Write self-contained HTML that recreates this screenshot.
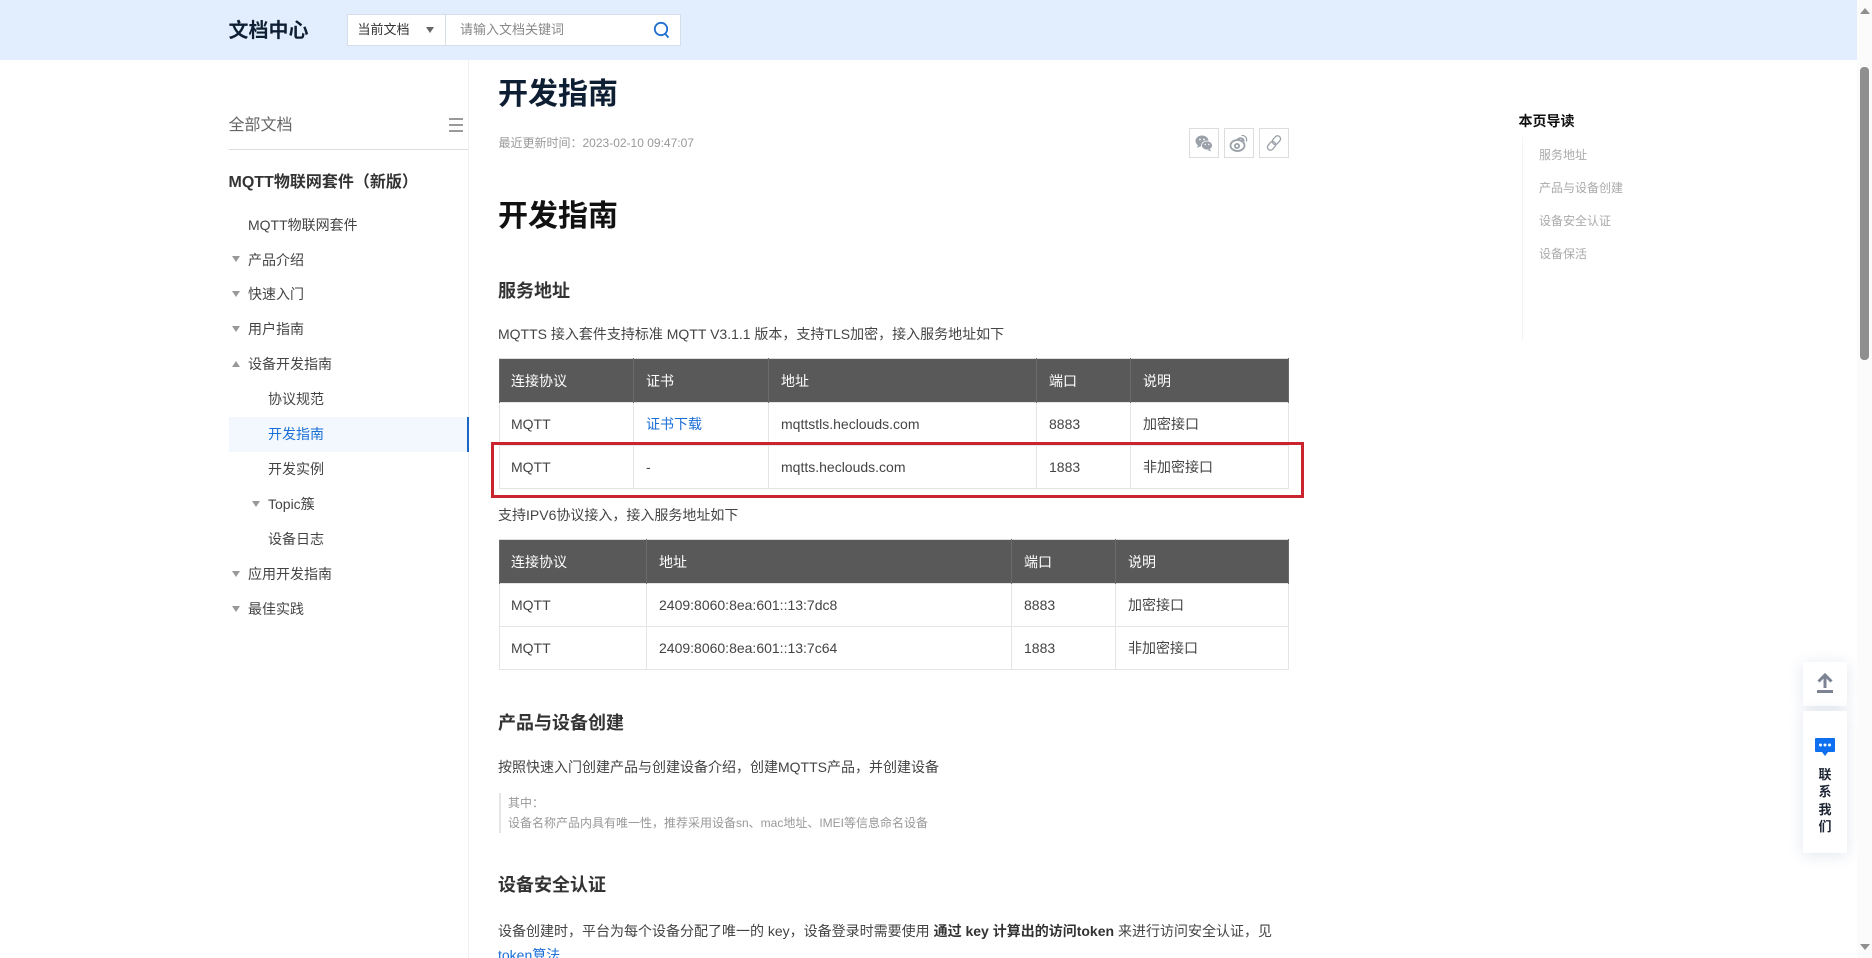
<!DOCTYPE html>
<html lang="zh-CN">
<head>
<meta charset="utf-8">
<title>开发指南</title>
<style>
html,body{margin:0;padding:0;width:1872px;height:958px;overflow:hidden;background:#fff}
body{position:relative;font-family:"Liberation Sans","Noto Sans CJK SC",sans-serif;color:#333;font-size:14px}
.a{position:absolute;white-space:nowrap}
.t{position:absolute;white-space:nowrap;height:24px;line-height:24px}
.n{font-size:14px;color:#444}
.caret{position:absolute;width:0;height:0;border-left:4.500px solid transparent;border-right:4.500px solid transparent;border-top:6px solid #999}
.up{border-top:0;border-bottom:6px solid #999}
h1,h2{margin:0;font-weight:700}
.h1{font-size:30px;height:40px;line-height:40px;left:498px}
.h2{font-size:18px;color:#333;left:498px;height:30px;line-height:30px}
.p{left:498px;font-size:14px;color:#444}
table{position:absolute;left:499px;width:789px;border-collapse:collapse;table-layout:fixed;font-size:14px;color:#444}
th{background:#595959;color:#fff;font-weight:400;text-align:left;padding:0 0 0 12px;height:44px;border:1px solid #6a6a6a;border-top:1px solid #ddd;border-bottom:0;box-sizing:border-box}
td{height:43px;padding:0 0 1px 12px;border:1px solid #e5e5e5;box-sizing:border-box}
th:first-child,td:first-child{padding-left:11px}
a{color:#1a6fd6;text-decoration:none}
.share{position:absolute;top:128px;width:30px;height:30px;box-sizing:border-box;border:1px solid #ddd;background:#fff}
.share svg{position:absolute;left:4px;top:4px}
.toc{left:1539px;font-size:12px;color:#aaa}
</style>
</head>
<body>
<!-- header -->
<div class="a" style="left:0;top:0;width:1857px;height:60px;background:#e2eefd"></div>
<div class="t" style="left:228.500px;top:17px;height:28px;line-height:28px;font-size:20px;font-weight:700;color:#0f1f33">文档中心</div>
<div class="a" style="left:346.500px;top:14px;width:334px;height:32px;box-sizing:border-box;background:#fff;border:1px solid #d5dde8"></div>
<div class="a" style="left:445px;top:15px;width:1px;height:30px;background:#d5dde8"></div>
<div class="t" style="left:357.500px;top:18px;font-size:13px;color:#333">当前文档</div>
<div class="caret" style="left:425.500px;top:27px;border-top-color:#666"></div>
<div class="t" style="left:460px;top:18px;font-size:13px;color:#888">请输入文档关键词</div>
<svg class="a" style="left:653px;top:21px" width="17" height="18" viewBox="0 0 17 18"><circle cx="8" cy="8" r="6.200" fill="none" stroke="#1f6fd0" stroke-width="1.800"/><path d="M12.200 12.800l3.300 3.800" stroke="#1f6fd0" stroke-width="1.800" fill="none"/></svg>

<!-- sidebar -->
<div class="t" style="left:228.500px;top:114px;font-size:16px;color:#666">全部文档</div>
<div class="a" style="left:449px;top:118px;width:14px;height:2px;background:#999"></div>
<div class="a" style="left:449px;top:124px;width:14px;height:2px;background:#999"></div>
<div class="a" style="left:449px;top:130px;width:14px;height:2px;background:#999"></div>
<div class="a" style="left:229px;top:149px;width:239px;height:1px;background:#ddd"></div>
<div class="a" style="left:468px;top:60px;width:1px;height:898px;background:#f0f0f0"></div>
<div class="t" style="left:228.500px;top:171px;font-size:16px;font-weight:700;color:#333">MQTT物联网套件（新版）</div>
<div class="t n" style="left:248px;top:212.500px">MQTT物联网套件</div>
<div class="caret" style="left:231.500px;top:256px"></div><div class="t n" style="left:248px;top:247.500px">产品介绍</div>
<div class="caret" style="left:231.500px;top:291px"></div><div class="t n" style="left:248px;top:282px">快速入门</div>
<div class="caret" style="left:231.500px;top:326px"></div><div class="t n" style="left:248px;top:317px">用户指南</div>
<div class="caret up" style="left:231.500px;top:361px"></div><div class="t n" style="left:248px;top:352px">设备开发指南</div>
<div class="t n" style="left:268px;top:387px">协议规范</div>
<div class="a" style="left:229px;top:417px;width:240px;height:35px;box-sizing:border-box;background:#f2f8fe;border-right:2px solid #1a66c6"></div>
<div class="t n" style="left:268px;top:422px;color:#1a6fd6">开发指南</div>
<div class="t n" style="left:268px;top:457px">开发实例</div>
<div class="caret" style="left:251.500px;top:501px"></div><div class="t n" style="left:268px;top:492px">Topic簇</div>
<div class="t n" style="left:268px;top:527px">设备日志</div>
<div class="caret" style="left:231.500px;top:571px"></div><div class="t n" style="left:248px;top:562px">应用开发指南</div>
<div class="caret" style="left:231.500px;top:606px"></div><div class="t n" style="left:248px;top:597px">最佳实践</div>

<!-- main -->
<h1 class="a h1" style="top:75px;color:#0f1f33">开发指南</h1>
<div class="t" style="left:498.500px;top:131px;font-size:12px;color:#999">最近更新时间：2023-02-10 09:47:07</div>
<div class="share" style="left:1189px"><svg width="20" height="20" viewBox="0 0 20 20"><ellipse cx="8" cy="8" rx="6.500" ry="5.500" fill="#9ba1a9"/><path d="M4 12l-1 3 4-2z" fill="#9ba1a9"/><ellipse cx="13" cy="12.500" rx="5.500" ry="4.500" fill="#9ba1a9" stroke="#fff" stroke-width=".8"/><path d="M16 16l1 2.500-3.500-1.500z" fill="#9ba1a9"/><circle cx="6" cy="6.500" r=".9" fill="#fff"/><circle cx="10" cy="6.500" r=".9" fill="#fff"/><circle cx="11.300" cy="11.500" r=".7" fill="#fff"/><circle cx="14.800" cy="11.500" r=".7" fill="#fff"/></svg></div>
<div class="share" style="left:1224px"><svg width="20" height="20" viewBox="0 0 20 20"><ellipse cx="8.500" cy="12.500" rx="7" ry="5.500" fill="none" stroke="#9ba1a9" stroke-width="1.800"/><path d="M8 7c3-3 6-2 5.500 1" fill="none" stroke="#9ba1a9" stroke-width="1.800"/><circle cx="8" cy="13" r="3" fill="#9ba1a9"/><circle cx="8" cy="13" r="1.200" fill="#fff"/><path d="M12.500 2.500c3-.5 6 2 5 6M12.500 5.500c1.500-.2 3 1 2.500 3" fill="none" stroke="#9ba1a9" stroke-width="1.200"/></svg></div>
<div class="share" style="left:1259px"><svg width="20" height="20" viewBox="0 0 20 20" fill="none" stroke="#9ba1a9" stroke-width="1.300"><g transform="rotate(40 10 10)"><rect x="7" y="1.500" width="6" height="9.500" rx="3"/><rect x="7" y="9" width="6" height="9.500" rx="3"/></g></svg></div>

<h1 class="a h1" style="top:197px;color:#111">开发指南</h1>
<h2 class="a h2" style="top:276px">服务地址</h2>
<div class="t p" style="top:322px">MQTTS 接入套件支持标准 MQTT V3.1.1 版本，支持TLS加密，接入服务地址如下</div>

<table style="top:358px">
<colgroup><col style="width:134px"><col style="width:135px"><col style="width:268px"><col style="width:94px"><col style="width:158px"></colgroup>
<tr><th>连接协议</th><th>证书</th><th>地址</th><th>端口</th><th>说明</th></tr>
<tr><td>MQTT</td><td><a>证书下载</a></td><td>mqttstls.heclouds.com</td><td>8883</td><td>加密接口</td></tr>
<tr><td>MQTT</td><td>-</td><td>mqtts.heclouds.com</td><td>1883</td><td>非加密接口</td></tr>
</table>
<div class="a" style="left:491px;top:442px;width:813px;height:56px;box-sizing:border-box;border:3px solid #c9252e"></div>

<div class="t p" style="top:503px">支持IPV6协议接入，接入服务地址如下</div>
<table style="top:539px">
<colgroup><col style="width:147px"><col style="width:365px"><col style="width:104px"><col style="width:173px"></colgroup>
<tr><th>连接协议</th><th>地址</th><th>端口</th><th>说明</th></tr>
<tr><td>MQTT</td><td>2409:8060:8ea:601::13:7dc8</td><td>8883</td><td>加密接口</td></tr>
<tr><td>MQTT</td><td>2409:8060:8ea:601::13:7c64</td><td>1883</td><td>非加密接口</td></tr>
</table>

<h2 class="a h2" style="top:708px">产品与设备创建</h2>
<div class="t p" style="top:755px">按照快速入门创建产品与创建设备介绍，创建MQTTS产品，并创建设备</div>
<div class="a" style="left:499px;top:793px;width:2px;height:40px;background:#e5e5e5"></div>
<div class="t" style="left:508px;top:791px;font-size:12px;color:#999">其中：</div>
<div class="t" style="left:508px;top:811px;font-size:12px;color:#999">设备名称产品内具有唯一性，推荐采用设备sn、mac地址、IMEI等信息命名设备</div>
<h2 class="a h2" style="top:870px">设备安全认证</h2>
<div class="t p" style="top:919px">设备创建时，平台为每个设备分配了唯一的 key，设备登录时需要使用 <b style="color:#333">通过 key 计算出的访问token</b> 来进行访问安全认证，见</div>
<div class="t p" style="top:943px"><a>token算法</a></div>

<!-- toc -->
<div class="t" style="left:1518.500px;top:109px;font-size:14px;font-weight:700;color:#111">本页导读</div>
<div class="a" style="left:1522px;top:137px;width:1px;height:203px;background:#f3f3f3"></div>
<div class="t toc" style="top:143px">服务地址</div>
<div class="t toc" style="top:176px">产品与设备创建</div>
<div class="t toc" style="top:209px">设备安全认证</div>
<div class="t toc" style="top:242px">设备保活</div>

<!-- float -->
<div class="a" style="left:1803px;top:662px;width:44px;height:44px;background:#fff;box-shadow:0 2px 14px rgba(54,88,140,.15)"></div>
<svg class="a" style="left:1815px;top:672px" width="20" height="22" viewBox="0 0 20 22"><path d="M3.500 9.500L10 3l6.500 6.500M10 3v13" fill="none" stroke="#7c8494" stroke-width="3"/><rect x="2" y="18" width="16" height="3" fill="#7c8494"/></svg>
<div class="a" style="left:1803px;top:711px;width:44px;height:142px;background:#fff;box-shadow:0 2px 14px rgba(54,88,140,.15)"></div>
<svg class="a" style="left:1815px;top:738px" width="20" height="18" viewBox="0 0 20 18"><path d="M1 0h18a1 1 0 0 1 1 1v12a1 1 0 0 1-1 1h-6l-3 4-3-4H1a1 1 0 0 1-1-1V1a1 1 0 0 1 1-1z" fill="#0e6ff0"/><circle cx="5.500" cy="7" r="1.500" fill="#fff"/><circle cx="10" cy="7" r="1.500" fill="#fff"/><circle cx="14.500" cy="7" r="1.500" fill="#fff"/></svg>
<div class="a" style="left:1803px;top:766px;width:44px;text-align:center;font-size:13px;font-weight:700;line-height:17.300px;color:#1c2433;white-space:normal">联<br>系<br>我<br>们</div>

<!-- scrollbar -->
<div class="a" style="left:1857px;top:0;width:15px;height:958px;background:#fbfbfb"></div>
<div class="a" style="left:1860px;top:8px;width:0;height:0;border-left:5px solid transparent;border-right:5px solid transparent;border-bottom:6px solid #8f8f8f"></div>
<div class="a" style="left:1860px;top:67px;width:9px;height:293px;background:#8f8f8f;border-radius:4px"></div>
<div class="a" style="left:1860px;top:944px;width:0;height:0;border-left:5px solid transparent;border-right:5px solid transparent;border-top:6px solid #8f8f8f"></div>
</body>
</html>
